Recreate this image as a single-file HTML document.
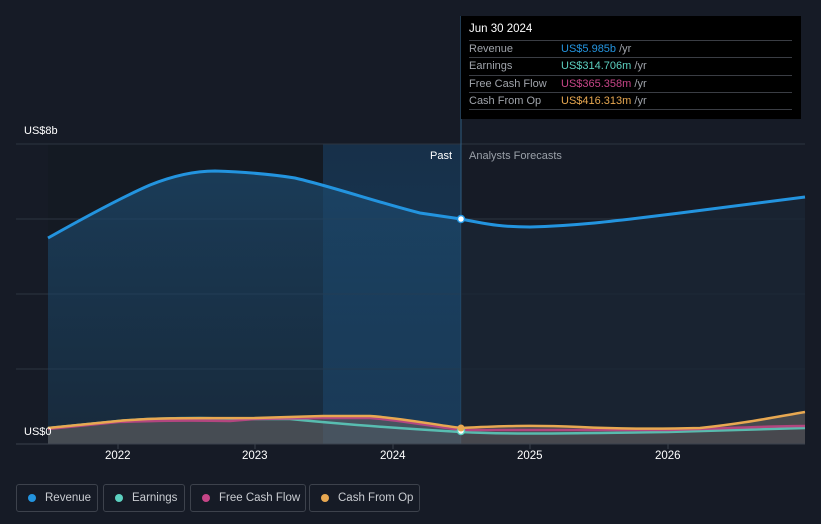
<!DOCTYPE html><html><head><style>
body{margin:0;width:821px;height:524px;background:#161b26;font-family:"Liberation Sans",sans-serif;overflow:hidden;position:relative}
.tt{position:absolute;left:461px;top:16px;width:340px;height:103px;background:#000;color:#fff;font-size:11px}
.tt .h{position:absolute;left:8px;top:7px;font-size:11.5px}
.row{position:absolute;left:8px;width:323px;border-top:1px solid #3a3d44;height:17px;line-height:17px;color:#a0a4ab}
.row span{position:absolute;left:92px}
.row em{font-style:normal}
.lg{position:absolute;top:484px;height:28px;border:1px solid #3d424c;border-radius:3px;color:#c9ccd1;font-size:11.5px;line-height:26px;box-sizing:border-box}
.lg i{position:absolute;left:11px;top:9px;width:8px;height:8px;border-radius:50%}
.lg b{font-weight:normal;position:absolute;left:28px;white-space:nowrap}
.ax{position:absolute;top:450px;color:#fff;font-size:11.5px}
</style></head><body>
<svg width="821" height="524" style="position:absolute;left:0;top:0">
<defs><linearGradient id="pg" x1="0" y1="0" x2="0" y2="1"><stop offset="0" stop-color="#173049"/><stop offset="1" stop-color="#183a5a"/></linearGradient>
<linearGradient id="rf" x1="0" y1="0" x2="0" y2="1"><stop offset="0" stop-color="#1d4a6e" stop-opacity=".7"/><stop offset="1" stop-color="#1b3a55" stop-opacity=".5"/></linearGradient></defs>
<rect x="48" y="144" width="275" height="300" fill="#141a23"/>
<rect x="323" y="144" width="138" height="300" fill="url(#pg)"/>
<g stroke="#2c3440" stroke-width="1"><line x1="16" y1="144" x2="805" y2="144"/><line x1="16" y1="219" x2="805" y2="219"/><line x1="16" y1="294" x2="805" y2="294"/><line x1="16" y1="369" x2="805" y2="369"/></g>
<line x1="461" y1="16" x2="461" y2="444" stroke="#2f5d80"/>
<path d="M48,238 C80,220 120,198 150,185 C175,175 195,171 215,171 C245,172 270,174 295,178 C330,186 380,203 420,213 L461,219 L461,444 L48,444Z" fill="url(#rf)"/>
<path d="M461,219 C490,225 505,227 530,227 C570,226 600,223 680,213 L805,197 L805,444 L461,444Z" fill="#1a2634" opacity=".8"/>
<path d="M48,238 C80,220 120,198 150,185 C175,175 195,171 215,171 C245,172 270,174 295,178 C330,186 380,203 420,213 L461,219 C490,225 505,227 530,227 C570,226 600,223 680,213 L805,197" fill="none" stroke="#2394df" stroke-width="3"/>
<path d="M48,428 L118,421 C150,418 180,418 255,418 L323,416 L370,416 C400,418 430,424 461,428 L530,426 C580,428 620,429 700,428 C740,424 770,418 805,412 L805,444 L48,444Z" fill="#6e6866" opacity=".55"/>
<path d="M48,428 L118,421 C140,419 160,418 200,418 L255,419 L290,419 C330,423 393,428 461,432 C500,434 530,434 668,432 L805,428" fill="none" stroke="#5cd0c0" stroke-width="2.5" opacity=".85"/>
<path d="M48,429 L118,422 C150,421 180,420 230,421 L255,419 L323,418 L370,418 C400,420 430,426 461,430 L530,430 L668,430 C740,428 770,426 805,426" fill="none" stroke="#c64587" stroke-width="2.5" opacity=".85"/>
<path d="M48,428 L118,421 C150,418 180,418 255,418 L323,416 L370,416 C400,418 430,424 461,428 C500,426 530,425 580,427 C620,429 660,429 700,428 C740,424 770,418 805,412" fill="none" stroke="#e8a851" stroke-width="2.5"/>
<line x1="16" y1="444" x2="805" y2="444" stroke="#3a414c"/>
<circle cx="461" cy="219" r="3.5" fill="#fff" stroke="#2394df" stroke-width="1.5"/>
<circle cx="461" cy="431" r="3.5" fill="#fff" stroke="#5cd0c0" stroke-width="1.5"/>
<circle cx="461" cy="428" r="3.5" fill="#e8a851"/>
<g stroke="#3a414c"><line x1="118" y1="444" x2="118" y2="449"/><line x1="255" y1="444" x2="255" y2="449"/><line x1="393" y1="444" x2="393" y2="449"/><line x1="530" y1="444" x2="530" y2="449"/><line x1="668" y1="444" x2="668" y2="449"/></g>
</svg>
<div style="position:absolute;left:24px;top:125px;color:#fff;font-size:11px">US$8b</div>
<div style="position:absolute;left:24px;top:426px;color:#fff;font-size:11px">US$0</div>
<div style="position:absolute;left:430px;top:150px;color:#fff;font-size:11px">Past</div>
<div style="position:absolute;left:469px;top:150px;color:#9aa0a8;font-size:11px">Analysts Forecasts</div>
<div class="ax" style="left:105px">2022</div><div class="ax" style="left:242px">2023</div><div class="ax" style="left:380px">2024</div><div class="ax" style="left:517px">2025</div><div class="ax" style="left:655px">2026</div>
<div class="tt"><div class="h">Jun 30 2024</div>
<div class="row" style="top:24px">Revenue<span><em style="color:#2394df">US$5.985b</em> /yr</span></div>
<div class="row" style="top:41px">Earnings<span><em style="color:#5cd0c0">US$314.706m</em> /yr</span></div>
<div class="row" style="top:59px">Free Cash Flow<span><em style="color:#c64587">US$365.358m</em> /yr</span></div>
<div class="row" style="top:76px">Cash From Op<span><em style="color:#e8a851">US$416.313m</em> /yr</span></div>
<div class="row" style="top:93px;height:0"></div></div>
<div class="lg" style="left:16px;width:82px"><i style="background:#2394df"></i><b>Revenue</b></div>
<div class="lg" style="left:103px;width:82px"><i style="background:#5cd0c0"></i><b>Earnings</b></div>
<div class="lg" style="left:190px;width:116px"><i style="background:#c64587"></i><b>Free Cash Flow</b></div>
<div class="lg" style="left:309px;width:111px"><i style="background:#e8a851"></i><b>Cash From Op</b></div>
</body></html>
